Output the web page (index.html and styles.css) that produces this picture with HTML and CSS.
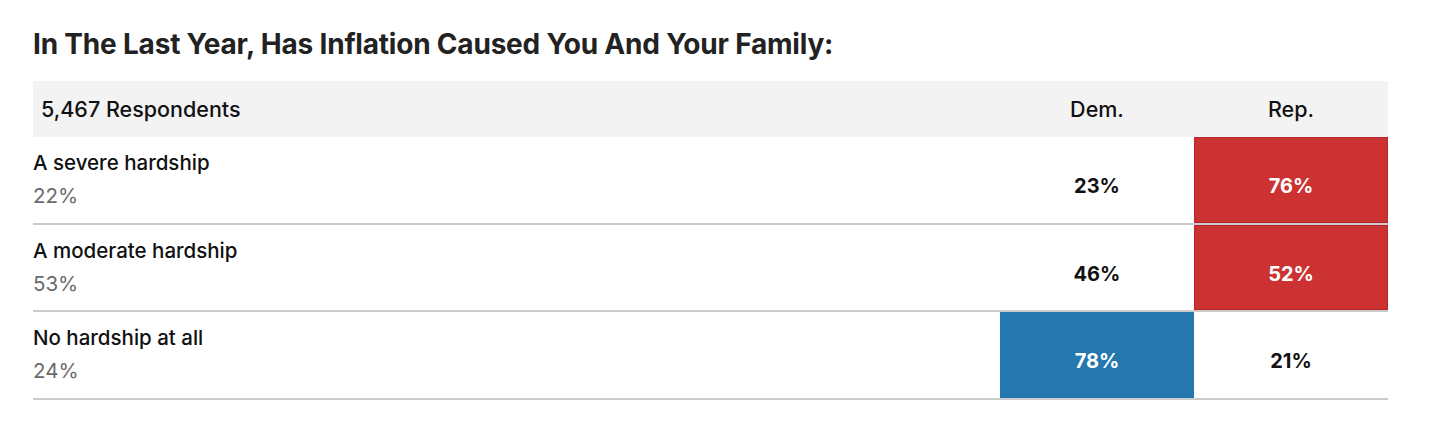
FILE: index.html
```html
<!DOCTYPE html>
<html lang="en">
<head>
<meta charset="utf-8">
<title>Inflation poll</title>
<link rel="stylesheet" href="styles.css">
</head>
<body>
<main class="poll">
  <h1 class="poll-title">In The Last Year, Has Inflation Caused You And Your Family:</h1>
  <div class="poll-table">
    <div class="row head">
      <div class="cell head-label">5,467 Respondents</div>
      <div class="cell head-num">Dem.</div>
      <div class="cell head-num">Rep.</div>
    </div>
    <div class="row body-row">
      <div class="cell label-cell">
        <div class="answer">A severe hardship</div>
        <div class="share">22%</div>
      </div>
      <div class="cell num-cell">23%</div>
      <div class="cell num-cell rep-hi">76%</div>
    </div>
    <div class="row body-row">
      <div class="cell label-cell">
        <div class="answer">A moderate hardship</div>
        <div class="share">53%</div>
      </div>
      <div class="cell num-cell">46%</div>
      <div class="cell num-cell rep-hi">52%</div>
    </div>
    <div class="row body-row">
      <div class="cell label-cell">
        <div class="answer">No hardship at all</div>
        <div class="share">24%</div>
      </div>
      <div class="cell num-cell dem-hi">78%</div>
      <div class="cell num-cell">21%</div>
    </div>
  </div>
</main>
</body>
</html>
```

FILE: styles.css
```css
* { box-sizing: border-box; }
html, body { margin: 0; padding: 0; background: #fff; }
body {
  font-family: "Inter", "Liberation Sans", sans-serif;
  color: #111;
}
.poll {
  padding: 25px 0 0 33px;
  width: 1388px;
}
.poll-title {
  margin: 0 0 17px;
  font-size: 28px;
  line-height: 39px;
  font-weight: 700;
  letter-spacing: -0.2px;
  color: #222;
}
.poll-table {
  display: flex;
  flex-direction: column;
}
.row {
  display: grid;
  grid-template-columns: 967px 194px 194px;
}
.row.head {
  background: #f3f3f3;
  height: 56px;
}
.head-label,
.head-num {
  display: flex;
  align-items: center;
  font-size: 21.5px;
  font-weight: 500;
  color: #111;
}
.head-label { padding-left: 8px; }
.head-num { justify-content: center; }
.body-row {
  height: 87.5px;
  border-bottom: 2px solid #cbcbcb;
}
.label-cell { padding-top: 13px; }
.answer {
  font-size: 20.5px;
  line-height: 26px;
  font-weight: 500;
  color: #111;
}
.share {
  margin-top: 7px;
  font-size: 20.5px;
  line-height: 26px;
  font-weight: 400;
  color: #6b6b6b;
}
.num-cell {
  display: flex;
  align-items: center;
  justify-content: center;
  padding-top: 13px;
  font-size: 20px;
  font-weight: 700;
  color: #111;
}
.rep-hi {
  background: #cc3232;
  color: #fff;
  box-shadow: inset 0 0 0 1px #b8262a;
}
.dem-hi {
  background: #2577b0;
  color: #fff;
}
```
